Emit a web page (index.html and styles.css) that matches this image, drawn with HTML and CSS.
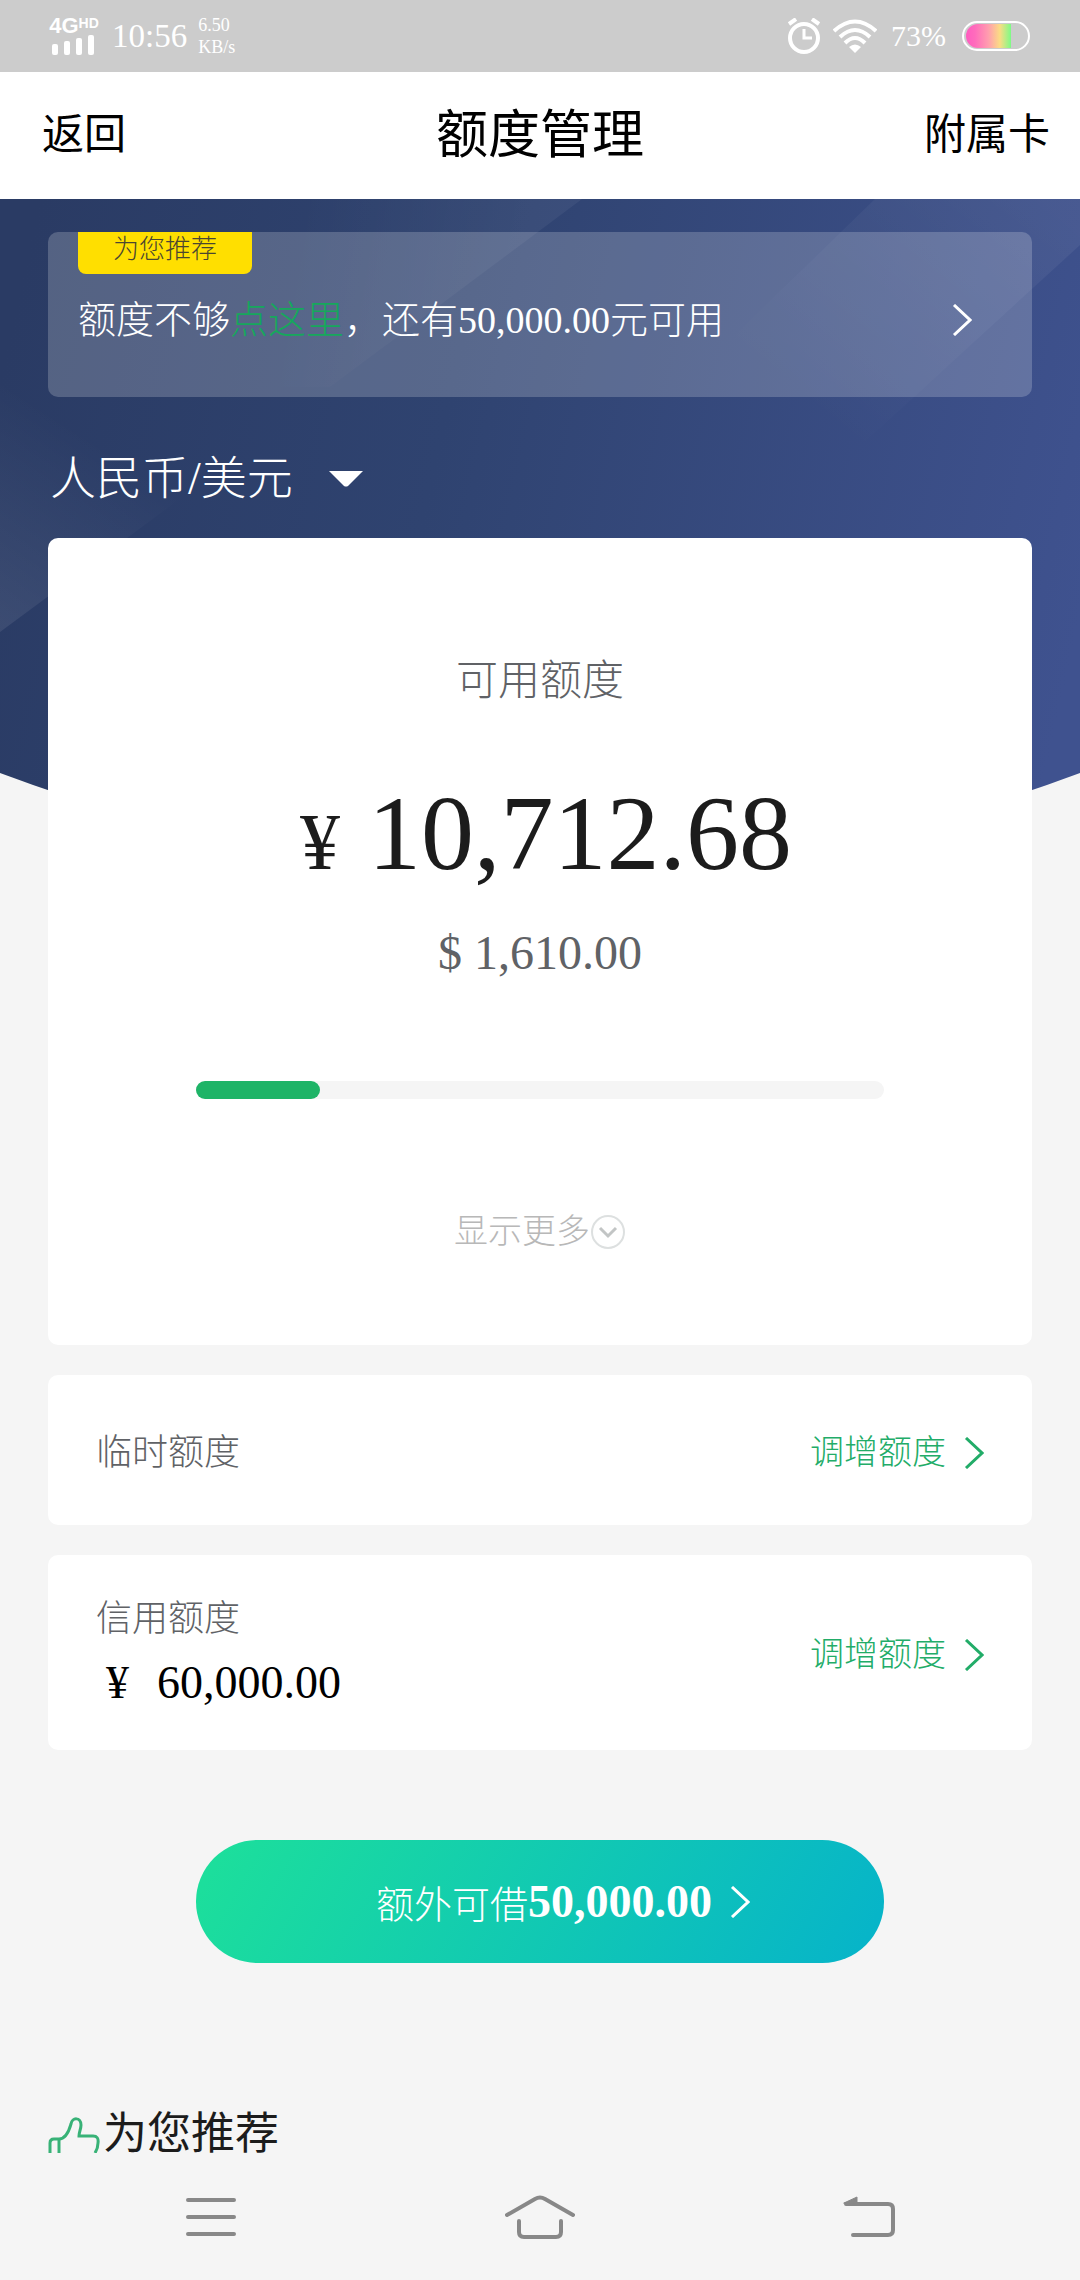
FILE: index.html
```html
<!DOCTYPE html>
<html lang="zh-CN">
<head>
	<meta charset="utf-8">
	<meta name="viewport" content="width=device-width, initial-scale=1">
	<title>额度管理</title>
	<link rel="stylesheet" href="styles.css">
</head>
<body>
	<div class="status">
		<div class="signal">
			<div class="network">4G<sup>HD</sup></div>
			<svg width="44" height="20" viewBox="0 0 44 20" fill="#fff">
				<rect x="0" y="9" width="6" height="11" rx="2"/>
				<rect x="12" y="6" width="6" height="14" rx="2"/>
				<rect x="24" y="3" width="6" height="17" rx="2"/>
				<rect x="36" y="0" width="6" height="20" rx="2"/>
			</svg>
		</div>
		<div class="time">10:56</div>
		<div class="speed"><span>6.50</span><span>KB/s</span></div>
		<div class="statusRight">
			<svg width="34" height="36" viewBox="0 0 34 36" fill="none" stroke="#fff">
				<circle cx="17" cy="20" r="14" stroke-width="4"/>
				<path d="M17 11v9h8" stroke-width="3"/>
				<path d="M2 6l7-5M32 6l-7-5" stroke-width="4"/>
			</svg>
			<svg class="wifi" width="44" height="34" viewBox="0 0 44 34" fill="none" stroke="#fff" stroke-width="4">
				<path d="M1 12Q22-7 43 12"/>
				<path d="M7 18Q22 4 37 18"/>
				<path d="M12 24Q22 14 32 24"/>
				<path d="M16 28Q22 23 28 28L22 34z" fill="#fff" stroke="none"/>
			</svg>
			<span class="percent">73%</span>
			<svg width="68" height="32" viewBox="0 0 68 32">
				<defs>
					<linearGradient id="charge">
						<stop offset="0" stop-color="#ff5cc0"/>
						<stop offset="0.2" stop-color="#ff6cbc"/>
						<stop offset="0.5" stop-color="#ff9eae"/>
						<stop offset="0.75" stop-color="#fbdc84"/>
						<stop offset="1" stop-color="#7dfb86"/>
					</linearGradient>
				</defs>
				<path d="M16 4H49V28H16A12 12 0 0 1 16 4z" fill="url(#charge)"/>
				<rect x="1" y="2" width="66" height="28" rx="14" fill="none" stroke="#fff" stroke-width="2"/>
			</svg>
		</div>
	</div>

	<header class="head">
		<a class="headLink headLeft" href="#">返回</a>
		<h1 class="title">额度管理</h1>
		<a class="headLink headRight" href="#">附属卡</a>
	</header>

	<main class="content">
		<svg class="backdrop" viewBox="0 0 1080 676" preserveAspectRatio="none">
			<defs>
				<linearGradient id="sky" gradientUnits="userSpaceOnUse" x1="0" y1="180" x2="1080" y2="420">
					<stop offset="0" stop-color="#2a3b64"/>
					<stop offset="0.4" stop-color="#2f4370"/>
					<stop offset="1" stop-color="#3f528f"/>
				</linearGradient>
				<linearGradient id="beamTop" gradientUnits="userSpaceOnUse" x1="300" y1="0" x2="530" y2="40">
					<stop offset="0" stop-color="#fff" stop-opacity="0"/>
					<stop offset="1" stop-color="#fff" stop-opacity="0.05"/>
				</linearGradient>
				<linearGradient id="beamLow" gradientUnits="userSpaceOnUse" x1="110" y1="250" x2="0" y2="420">
					<stop offset="0" stop-color="#fff" stop-opacity="0"/>
					<stop offset="1" stop-color="#fff" stop-opacity="0.08"/>
				</linearGradient>
				<linearGradient id="beamRight" gradientUnits="userSpaceOnUse" x1="1040" y1="0" x2="840" y2="240">
					<stop offset="0" stop-color="#fff" stop-opacity="0.06"/>
					<stop offset="1" stop-color="#fff" stop-opacity="0"/>
				</linearGradient>
			</defs>
			<path d="M0 0H1080V574Q540 776 0 574z" fill="url(#sky)"/>
			<path d="M0 0H582L330 188H0z" fill="url(#beamTop)"/>
			<path d="M0 180H342L0 433z" fill="url(#beamLow)"/>
			<path d="M875 0H1080V46L820 284L700 170z" fill="url(#beamRight)"/>
		</svg>

		<section class="promo">
			<div class="tag">为您推荐</div>
			<div class="promoLine">
				<p>额度不够<a class="promoLink" href="#">点这里</a>，还有50,000.00元可用</p>
				<svg class="arrow" viewBox="0 0 20 32"><path d="M2 1L18 16L2 31"/></svg>
			</div>
		</section>

		<label class="currency">
			<select class="currencySelect" name="currency" aria-label="币种">
				<option>人民币/美元</option>
			</select>
			<svg width="34" height="16" viewBox="0 0 34 16"><path d="M0 0H34L19 15Q17 16 15 15z" fill="#fff"/></svg>
		</label>

		<section class="card limit">
			<h2 class="limitName">可用额度</h2>
			<p class="amount"><span class="yen">¥</span>10,712.68</p>
			<p class="dollar">$ 1,610.00</p>
			<div class="track" role="progressbar" aria-label="可用额度" aria-valuenow="18" aria-valuemin="0" aria-valuemax="100">
				<div class="bar" style="width:18%"></div>
			</div>
			<button type="button" class="more">显示更多<svg width="36" height="36" viewBox="0 0 36 36" fill="none">
				<circle cx="18" cy="18" r="16" stroke="#dde0e0" stroke-width="2"/>
				<path d="M10 14L18 22L26 14" stroke="#c2c5c5" stroke-width="3"/>
			</svg></button>
		</section>

		<section class="card row">
			<h2 class="rowName">临时额度</h2>
			<a class="raise" href="#">调增额度<svg class="arrow" viewBox="0 0 20 32"><path d="M2 1L18 16L2 31"/></svg></a>
		</section>

		<section class="card row">
			<div>
				<h2 class="rowName">信用额度</h2>
				<p class="credit"><span class="creditYen">¥</span>60,000.00</p>
			</div>
			<a class="raise" href="#">调增额度<svg class="arrow" viewBox="0 0 20 32"><path d="M2 1L18 16L2 31"/></svg></a>
		</section>

		<button type="button" class="borrow">额外可借<b>50,000.00</b><svg class="arrow" viewBox="0 0 20 32"><path d="M2 1L18 16L2 31"/></svg></button>

		<section class="recommend">
			<svg width="52" height="36" viewBox="0 0 52 36" fill="none" stroke="#38b277" stroke-width="3">
				<path d="M2 36V26Q2 22 6 22H11C18 22 21 14 23 7C24 0 33 0 33 8C33 12 31 15 31 19H45Q51 19 50 26Q50 31 47 36"/>
				<path d="M11 22V36"/>
			</svg>
			<h2 class="recommendName">为您推荐</h2>
		</section>
	</main>

	<nav class="keys">
		<button type="button" class="key" aria-label="菜单">
			<svg width="50" height="44" viewBox="0 0 50 44"><path d="M2 5H48M2 22H48M2 39H48"/></svg>
		</button>
		<button type="button" class="key" aria-label="主页">
			<svg width="70" height="44" viewBox="0 0 70 44"><path d="M2 20L30 4Q35 1 40 4L68 20M14 26V37Q14 42 19 42H51Q56 42 56 37V26"/></svg>
		</button>
		<button type="button" class="key" aria-label="后退">
			<svg width="52" height="44" viewBox="0 0 52 44"><path d="M3 9H45Q50 9 50 14V35Q50 40 45 40H10"/><path d="M1 8L14 2V9z" stroke-width="1" fill="#888"/></svg>
		</button>
	</nav>
</body>
</html>
```
FILE: styles.css
```css
*{
	box-sizing:border-box;
}
body{
	margin:0;
	min-height:100vh;
	display:flex;
	flex-direction:column;
	background:#f5f5f5;
	color:#000;
	font-family:"Liberation Serif","Noto Sans CJK SC",serif;
	font-weight:300;
}
h1, h2, p{
	margin:0;
	font-weight:300;
}
a{
	color:inherit;
	text-decoration:none;
}
button, select{
	font:inherit;
	color:inherit;
	border:0;
	padding:0;
	background:none;
}
svg{
	display:block;
	flex:none;
}

/* status bar */
.status{
	display:flex;
	align-items:center;
	height:72px;
	padding:0 50px 0 48px;
	background:#cccccc;
	color:#fff;
}
.signal{
	width:52px;
	display:flex;
	flex-direction:column;
	align-items:center;
}
.network{
	display:flex;
	font:bold 22px/18px "Liberation Sans",sans-serif;
}
.network sup{
	font-size:14px;
	line-height:12px;
}
.time{
	margin-left:12px;
	font-size:33px;
	line-height:40px;
}
.speed{
	display:flex;
	flex-direction:column;
	margin-left:11px;
	font-size:18px;
	line-height:22px;
}
.statusRight{
	display:flex;
	align-items:center;
	margin-left:auto;
}
.wifi{
	margin:0 14px 0 12px;
}
.percent{
	margin-right:16px;
	font-size:30px;
}

/* title bar */
.head{
	display:grid;
	grid-template-columns:1fr auto 1fr;
	align-items:center;
	height:127px;
	padding:0 30px 10px;
	background:#fff;
}
.headLink{
	font-size:42px;
	font-weight:400;
}
.headLeft{
	padding-left:12px;
}
.headRight{
	text-align:right;
}
.title{
	font-size:52px;
	font-weight:400;
}

.content{
	position:relative;
	display:flex;
	flex-direction:column;
	padding:33px 48px 0;
}
.backdrop{
	position:absolute;
	top:0;
	left:0;
	width:100%;
	height:676px;
	z-index:-1;
}
.arrow{
	width:20px;
	height:32px;
	fill:none;
	stroke:currentColor;
	stroke-width:3px;
}

.promo{
	height:165px;
	padding:0 60px 0 30px;
	border-radius:10px;
	background:rgba(255,255,255,0.2);
	color:#fff;
}
.tag{
	width:174px;
	height:42px;
	border-radius:0 0 8px 8px;
	background:#ffdf00;
	color:#4a4631;
	font-size:26px;
	line-height:36px;
	text-align:center;
}
.promoLine{
	display:flex;
	align-items:center;
	justify-content:space-between;
	margin-top:16px;
	font-size:38px;
	line-height:60px;
}
.promoLink{
	color:#16a75c;
}

.currency{
	display:flex;
	align-items:center;
	gap:36px;
	margin:52px 0 29px;
	padding-left:2px;
	color:#fff;
}
.currencySelect{
	appearance:none;
	font-size:46px;
	line-height:60px;
}

.card{
	margin-bottom:30px;
	border-radius:10px;
	background:#fff;
}
.limit{
	display:flex;
	flex-direction:column;
	align-items:center;
	padding:113px 0 88px;
}
.limitName{
	color:#606266;
	font-size:42px;
	line-height:60px;
}
.amount{
	margin-top:63px;
	color:#1c1c1c;
	font-size:106px;
	line-height:120px;
}
.yen{
	margin:0 28px 0 12px;
	font-size:80px;
	line-height:80px;
}
.dollar{
	margin-top:29px;
	color:#606266;
	font-size:48px;
	line-height:60px;
}
.track{
	width:70%;
	margin-top:98px;
	border-radius:9px;
	background:#f5f5f5;
}
.bar{
	height:18px;
	border-radius:9px;
	background:#1eb467;
}
.more{
	display:flex;
	align-items:center;
	margin-top:108px;
	color:#b8b8b8;
	font-size:34px;
	line-height:50px;
}

.row{
	display:flex;
	align-items:center;
	justify-content:space-between;
	min-height:150px;
	padding:42px 48px 37px;
}
.rowName{
	color:#606266;
	font-size:36px;
	line-height:44px;
}
.raise{
	display:flex;
	align-items:center;
	gap:18px;
	color:#22ac68;
	font-size:34px;
	line-height:44px;
}
.credit{
	margin-top:12px;
	padding-left:10px;
	font-size:46px;
	line-height:60px;
}
.creditYen{
	margin-right:28px;
}

.borrow{
	display:flex;
	align-items:center;
	justify-content:center;
	align-self:center;
	width:70%;
	height:123px;
	margin-top:60px;
	padding-left:46px;
	border-radius:62px;
	background:linear-gradient(120deg,#1de09a,#06b3ca);
	color:#fff;
	font-size:38px;
}
.borrow b{
	margin-right:18px;
	font-size:46px;
	font-weight:700;
}

.recommend{
	display:flex;
	align-items:flex-end;
	gap:3px;
	margin-top:154px;
}
.recommendName{
	color:#1c1c1c;
	font-size:44px;
	font-weight:400;
	line-height:36px;
}

/* system keys */
.keys{
	display:grid;
	grid-template-columns:repeat(3,1fr);
	align-items:center;
	height:126px;
	margin-top:auto;
	padding:0 46px;
}
.key{
	display:flex;
	justify-content:center;
}
.key svg{
	fill:none;
	stroke:#888;
	stroke-width:4px;
	stroke-linecap:round;
	stroke-linejoin:round;
}
```
